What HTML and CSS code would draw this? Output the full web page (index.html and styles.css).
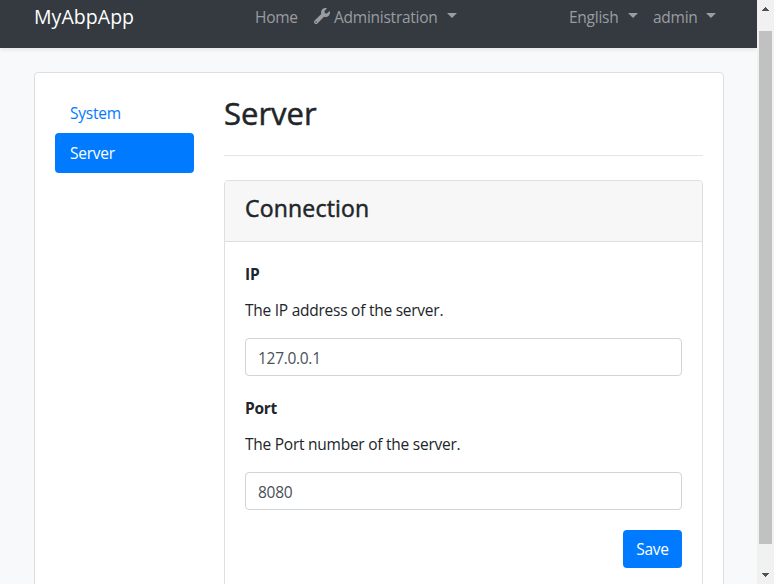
FILE: index.html
```
<!DOCTYPE html>
<html lang="en">
<head>
<meta charset="utf-8">
<title>MyAbpApp</title>
<link rel="stylesheet" href="styles.css">
</head>
<body>
<div class="viewport">
  <div class="page">
    <nav class="navbar">
      <a class="brand">MyAbpApp</a>
      <div class="nav-main">
        <a class="home">Home</a>
        <a class="dropdown administration"><svg class="wrench" viewBox="0 0 512 512"><path fill="currentColor" d="M507.73 109.1c-2.24-9.03-13.54-12.09-20.12-5.51l-74.36 74.36-67.88-11.31-11.31-67.88 74.36-74.36c6.62-6.62 3.43-17.9-5.66-20.16-47.38-11.74-99.55.91-136.58 37.93-39.64 39.64-50.55 97.1-34.05 147.2L18.74 402.76c-24.99 24.99-24.99 65.51 0 90.5 24.99 24.99 65.51 24.99 90.5 0l213.21-213.21c50.12 16.71 107.47 5.68 147.37-34.22 37.07-37.07 49.7-89.32 37.91-136.73zM64 472c-13.25 0-24-10.75-24-24 0-13.26 10.75-24 24-24s24 10.75 24 24c0 13.25-10.74 24-24 24z"/></svg><span>Administration</span></a>
      </div>
      <div class="nav-user">
        <a class="dropdown language"><span>English</span></a>
        <a class="dropdown account"><span>admin</span></a>
      </div>
    </nav>
    <main class="panel">
      <div class="tabs">
        <a class="tab">System</a>
        <a class="tab active">Server</a>
      </div>
      <section class="content">
        <h2>Server</h2>
        <hr>
        <div class="card">
          <div class="card-header"><h4>Connection</h4></div>
          <form class="card-body">
            <label for="ip">IP</label>
            <p>The IP address of the server.</p>
            <input id="ip" type="text" value="127.0.0.1">
            <label for="port">Port</label>
            <p>The Port number of the server.</p>
            <input id="port" type="text" value="8080">
            <button type="button">Save</button>
          </form>
        </div>
      </section>
    </main>
  </div>
  <div class="scrollbar">
    <svg class="arrow" viewBox="0 0 7 4" shape-rendering="crispEdges"><path d="M3 0h1v1h1v1h1v1h1v1H0V3h1V2h1V1h1z"/></svg>
    <div class="thumb"></div>
    <svg class="arrow" viewBox="0 0 7 4" shape-rendering="crispEdges"><path d="M0 0h7v1H6v1H5v1H4v1H3V3H2V2H1V1H0z"/></svg>
  </div>
</div>
</body>
</html>
```
FILE: styles.css
```
* { box-sizing: border-box; }
body {
  margin: 0;
  overflow: hidden;
  font: 15.5px/24px "Open Sans", sans-serif;
  letter-spacing: -.25px;
  color: #212529;
  background: #f8f9fa;
}
.viewport { display: flex; height: 584px; overflow: hidden; }
.page { width: 757px; height: 584px; overflow: hidden; }
.navbar {
  display: flex;
  height: 48px;
  padding: 5px 41px 0 34px;
  color: #9a9da0;
  background: #343a40;
  box-shadow: 0 2px 4px rgba(0, 0, 0, .075);
}
.brand {
  width: 221px;
  font-size: 19.5px;
  letter-spacing: .05px;
  color: #fff;
}
.nav-main { display: flex; width: 314px; }
.home { width: 59px; }
.wrench { width: 16px; height: 16px; margin: 3px 4px 0 0; }
.dropdown { display: flex; }
.administration span { width: 113px; }
.nav-user { display: flex; }
.language { width: 84px; }
.language span { width: 59px; }
.account span { width: 53px; }
.dropdown::after {
  content: "";
  width: 0;
  margin-top: 8px;
  height: 0;
  border: 5px solid transparent;
  border-top-color: currentColor;
  border-bottom: 0;
}
.panel {
  display: flex;
  gap: 30px;
  width: 690px;
  height: 700px;
  margin: 24px 0 0 34px;
  padding: 20px;
  background: #fff;
  border: 1px solid #dfdfdf;
  border-radius: 4px;
}
.tabs { width: 139px; }
.tab {
  display: block;
  height: 40px;
  padding: 8px 15px;
  color: #007bff;
  border-radius: 4px;
}
.tab.active { color: #fff; background: #007bff; }
.content { width: 479px; }
h2, h4, p { margin: 0; }
h2, h4 { font-weight: 500; -webkit-text-stroke: .5px currentColor; }
h2 { height: 62px; font-size: 31px; line-height: 40px; letter-spacing: 0; }
hr { height: 1px; margin: 0 0 24px; border: 0; background: #e5e5e5; }
.card { height: 600px; border: 1px solid #dfdfdf; border-radius: 4px; }
.card-header {
  height: 61px;
  padding: 12px 20px;
  background: #f7f7f7;
  border-bottom: 1px solid #dfdfdf;
  border-radius: 3px 3px 0 0;
}
h4 { font-size: 23px; line-height: 30px; letter-spacing: .2px; }
.card-body { display: flex; flex-direction: column; padding: 20px; }
label { height: 36px; font-weight: 700; }
p { height: 40px; }
input {
  height: 38px;
  margin: 0 0 20px;
  padding: 3px 12px 1px;
  font: inherit;
  letter-spacing: -.3px;
  color: #495057;
  background: #fff;
  border: 1px solid #ced4da;
  border-radius: 4px;
}
button {
  align-self: flex-end;
  width: 59px;
  height: 38px;
  padding: 0;
  font: inherit;
  letter-spacing: inherit;
  color: #fff;
  background: #007bff;
  border: 0;
  border-radius: 4px;
}
.scrollbar {
  display: flex;
  flex-direction: column;
  align-items: center;
  justify-content: space-between;
  width: 17px;
  height: 584px;
  padding: 7px 0 7px;
  background: #f1f1f1;
}
.arrow { width: 7px; height: 4px; fill: #505050; }
.thumb { width: 13px; height: 513px; margin: 20px 0 29px; background: #c1c1c1; }
```
